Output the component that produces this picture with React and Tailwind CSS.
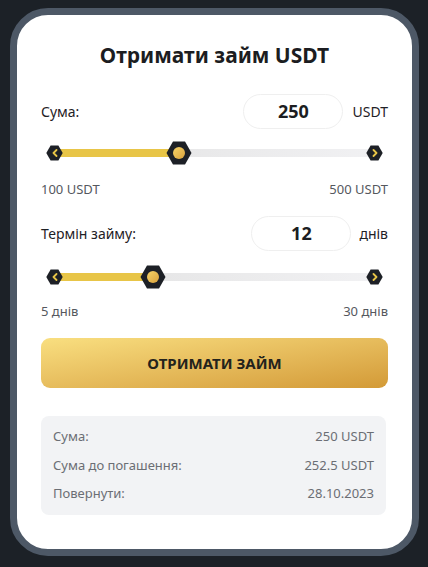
import { useState } from 'react';

function Hex({ className, children }) {
  return (
    <div className={`flex items-center justify-center ${className}`}>
      <svg viewBox="0 0 26 24" className="absolute inset-0 h-full w-full">
        <polygon points="7,0.5 19,0.5 25.5,12 19,23.5 7,23.5 0.5,12" fill="#1d2026" />
      </svg>
      <div className="relative">{children}</div>
    </div>
  );
}

function Chevron({ dir }) {
  return (
    <svg width="6" height="8" viewBox="0 0 6 8">
      <path
        d={dir === 'left' ? 'M4.5 1 L1.5 4 L4.5 7' : 'M1.5 1 L4.5 4 L1.5 7'}
        fill="none"
        stroke="#e8c547"
        strokeWidth="1.8"
        strokeLinecap="round"
        strokeLinejoin="round"
      />
    </svg>
  );
}

function Slider({ fillClass, thumbClass }) {
  return (
    <div className="relative mx-[5px] flex h-[26px] items-center justify-between">
      <div className="absolute left-[9px] right-[9px] top-[9px] h-[8px] bg-gradient-to-r from-[#e2e2e2] to-[#f1f1f3]" />
      <div className={`absolute left-[9px] top-[9px] h-[8px] bg-[#e8c547] ${fillClass}`} />
      <Hex className="relative h-[16px] w-[17px]">
        <Chevron dir="left" />
      </Hex>
      <Hex className={`absolute top-[1px] h-[24px] w-[26px] ${thumbClass}`}>
        <div className="h-[12px] w-[12px] rounded-full bg-gradient-to-br from-[#f6d468] to-[#d9a23c]" />
      </Hex>
      <Hex className="relative h-[16px] w-[17px]">
        <Chevron dir="right" />
      </Hex>
    </div>
  );
}

export default function App() {
  const [amount] = useState(250);
  const [days] = useState(12);

  return (
    <div
      className="min-h-screen bg-[#1c2127] pb-[10px] pl-[10px] pr-[9px] pt-[8px]"
      style={{ fontFamily: '"Noto Sans", "Open Sans", sans-serif' }}
    >
      <div className="h-[548px] rounded-[38px] border-[7px] border-[#4d5866] bg-white px-[24px] pt-[26px]">
        <h1 className="text-center text-[21px] font-bold leading-[28px] text-[#1c1d21]">
          Отримати займ USDT
        </h1>

        <div className="mt-[25px] flex h-[35px] items-center">
          <span className="flex-1 text-[14px] text-[#1f2126]">Сума:</span>
          <div className="flex h-[35px] w-[100px] items-center justify-center rounded-full border border-[#efefef] text-[18px] font-bold text-[#1c1d21]">
            {amount}
          </div>
          <span className="ml-[9px] text-[14px] text-[#1f2126]">USDT</span>
        </div>

        <div className="mt-[11px]">
          <Slider fillClass="w-[124px]" thumbClass="left-[120px]" />
        </div>

        <div className="mt-[14px] flex justify-between text-[13px] text-[#55585e]">
          <span>100 USDT</span>
          <span>500 USDT</span>
        </div>

        <div className="mt-[16px] flex h-[35px] items-center">
          <span className="flex-1 text-[14px] text-[#1f2126]">Термін займу:</span>
          <div className="flex h-[35px] w-[100px] items-center justify-center rounded-full border border-[#efefef] text-[18px] font-bold text-[#1c1d21]">
            {days}
          </div>
          <span className="ml-[8px] text-[14px] text-[#1f2126]">днів</span>
        </div>

        <div className="mt-[13px]">
          <Slider fillClass="w-[98px]" thumbClass="left-[94px]" />
        </div>

        <div className="mt-[12px] flex justify-between text-[13px] text-[#55585e]">
          <span>5 днів</span>
          <span>30 днів</span>
        </div>

        <button className="mt-[17px] flex h-[50px] w-full items-center justify-center rounded-[9px] bg-gradient-to-br from-[#f9df80] to-[#d39a36] text-[15px] font-bold text-[#23231c]">
          ОТРИМАТИ ЗАЙМ
        </button>

        <div className="mr-[2px] mt-[28px] flex flex-col gap-[9px] rounded-[8px] bg-[#f2f3f5] px-[12px] py-[11px] text-[13px] text-[#6b6e74]">
          <div className="flex justify-between">
            <span>Сума:</span>
            <span>250 USDT</span>
          </div>
          <div className="flex justify-between">
            <span>Сума до погашення:</span>
            <span>252.5 USDT</span>
          </div>
          <div className="flex justify-between">
            <span>Повернути:</span>
            <span>28.10.2023</span>
          </div>
        </div>
      </div>
    </div>
  );
}
